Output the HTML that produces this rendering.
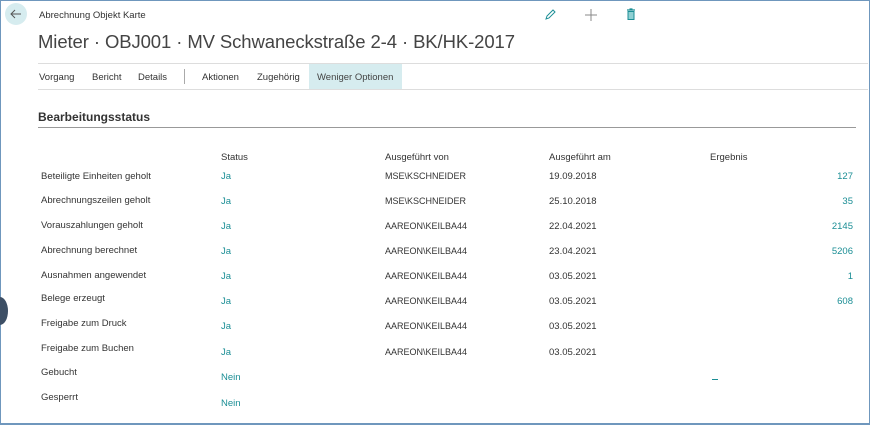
<!DOCTYPE html>
<html><head><meta charset="utf-8"><style>
*{margin:0;padding:0;box-sizing:border-box}
body{width:870px;height:425px;overflow:hidden;background:#fff;font-family:"Liberation Sans",sans-serif;color:#333;position:relative}
.frame{position:absolute;left:0;top:0;width:870px;height:425px;border:1px solid #6f97bd;border-bottom:2px solid #6f97bd}
.a{position:absolute;white-space:nowrap}
.s{font-size:9.5px;color:#333}
.t{color:#1b8e95;font-size:9.5px}
.r{text-align:right;width:60px}
</style></head><body>
<div class="frame"></div>
<div class="a" style="left:5px;top:3px;width:22px;height:22px;border-radius:50%;background:#d6ecef"></div>
<svg class="a" style="left:9px;top:7px" width="14" height="14" viewBox="0 0 14 14"><path d="M12 7H2M6 3L2 7l4 4" stroke="#555" stroke-width="1" fill="none"/></svg>
<div class="a s" style="left:39px;top:10px;font-size:9.5px">Abrechnung Objekt Karte</div>
<div class="a" style="left:38px;top:31px;font-size:18.5px;color:#444;letter-spacing:-0.1px">Mieter · OBJ001 · MV Schwaneckstraße 2-4 · BK/HK-2017</div>
<svg class="a" style="left:543px;top:8px" width="14" height="14" viewBox="0 0 14 14"><path d="M3 11l1-3 6-6 2 2-6 6z" stroke="#1b8e95" stroke-width="1" fill="none"/></svg>
<svg class="a" style="left:584px;top:8px" width="14" height="14" viewBox="0 0 14 14"><path d="M7 1v12M1 7h12" stroke="#888" stroke-width="1"/></svg>
<svg class="a" style="left:625px;top:8px" width="12" height="14" viewBox="0 0 12 14"><path d="M2 2h8M4.5 1h3" stroke="#1b8e95" stroke-width="1.2"/><rect x="3" y="3.5" width="6" height="8" fill="#8fd0d3" stroke="#1b8e95" stroke-width="1"/></svg>
<div class="a" style="left:38px;top:63px;width:830px;height:1px;background:#ddd"></div>
<div class="a" style="left:38px;top:89px;width:830px;height:1px;background:#ddd"></div>
<div class="a" style="left:309px;top:64px;width:93px;height:25px;background:#d6ecef"></div>
<div class="a s" style="left:39px;top:72px">Vorgang</div>
<div class="a s" style="left:92px;top:72px">Bericht</div>
<div class="a s" style="left:138px;top:72px">Details</div>
<div class="a" style="left:184px;top:69px;width:1px;height:15px;background:#aaa"></div>
<div class="a s" style="left:202px;top:72px">Aktionen</div>
<div class="a s" style="left:257px;top:72px">Zugehörig</div>
<div class="a s" style="left:317px;top:72px;color:#444">Weniger Optionen</div>
<div class="a" style="left:38px;top:110px;font-size:12px;font-weight:bold;color:#333">Bearbeitungsstatus</div>
<div class="a" style="left:38px;top:127px;width:818px;height:1px;background:#999"></div>
<div class="a" style="left:-8px;top:297px;width:16px;height:28px;border-radius:50%;background:#3d4f65"></div>
<div class="a s" style="left:221px;top:152px">Status</div>
<div class="a s" style="left:385px;top:152px">Ausgeführt von</div>
<div class="a s" style="left:549px;top:152px">Ausgeführt am</div>
<div class="a s" style="left:710px;top:152px">Ergebnis</div>

<div class="a s" style="left:41px;top:171px">Beteiligte Einheiten geholt</div>
<div class="a s" style="left:41px;top:195px">Abrechnungszeilen geholt</div>
<div class="a s" style="left:41px;top:220px">Vorauszahlungen geholt</div>
<div class="a s" style="left:41px;top:245px">Abrechnung berechnet</div>
<div class="a s" style="left:41px;top:270px">Ausnahmen angewendet</div>
<div class="a s" style="left:41px;top:293px">Belege erzeugt</div>
<div class="a s" style="left:41px;top:318px">Freigabe zum Druck</div>
<div class="a s" style="left:41px;top:343px">Freigabe zum Buchen</div>
<div class="a s" style="left:41px;top:367px">Gebucht</div>
<div class="a s" style="left:41px;top:392px">Gesperrt</div>

<div class="a t" style="left:221px;top:171px">Ja</div>
<div class="a t" style="left:221px;top:196px">Ja</div>
<div class="a t" style="left:221px;top:221px">Ja</div>
<div class="a t" style="left:221px;top:246px">Ja</div>
<div class="a t" style="left:221px;top:271px">Ja</div>
<div class="a t" style="left:221px;top:296px">Ja</div>
<div class="a t" style="left:221px;top:321px">Ja</div>
<div class="a t" style="left:221px;top:347px">Ja</div>
<div class="a t" style="left:221px;top:372px">Nein</div>
<div class="a t" style="left:221px;top:398px">Nein</div>

<div class="a s" style="left:385px;top:171px;font-size:9px">MSE\KSCHNEIDER</div>
<div class="a s" style="left:385px;top:196px;font-size:9px">MSE\KSCHNEIDER</div>
<div class="a s" style="left:385px;top:221px;font-size:9px">AAREON\KEILBA44</div>
<div class="a s" style="left:385px;top:246px;font-size:9px">AAREON\KEILBA44</div>
<div class="a s" style="left:385px;top:271px;font-size:9px">AAREON\KEILBA44</div>
<div class="a s" style="left:385px;top:296px;font-size:9px">AAREON\KEILBA44</div>
<div class="a s" style="left:385px;top:321px;font-size:9px">AAREON\KEILBA44</div>
<div class="a s" style="left:385px;top:347px;font-size:9px">AAREON\KEILBA44</div>

<div class="a s" style="left:549px;top:171px">19.09.2018</div>
<div class="a s" style="left:549px;top:196px">25.10.2018</div>
<div class="a s" style="left:549px;top:221px">22.04.2021</div>
<div class="a s" style="left:549px;top:246px">23.04.2021</div>
<div class="a s" style="left:549px;top:271px">03.05.2021</div>
<div class="a s" style="left:549px;top:296px">03.05.2021</div>
<div class="a s" style="left:549px;top:321px">03.05.2021</div>
<div class="a s" style="left:549px;top:347px">03.05.2021</div>

<div class="a t r" style="left:793px;top:171px">127</div>
<div class="a t r" style="left:793px;top:196px">35</div>
<div class="a t r" style="left:793px;top:221px">2145</div>
<div class="a t r" style="left:793px;top:246px">5206</div>
<div class="a t r" style="left:793px;top:271px">1</div>
<div class="a t r" style="left:793px;top:296px">608</div>
<div class="a" style="left:712px;top:379px;width:6px;height:1px;background:#1b8e95"></div>
</body></html>
